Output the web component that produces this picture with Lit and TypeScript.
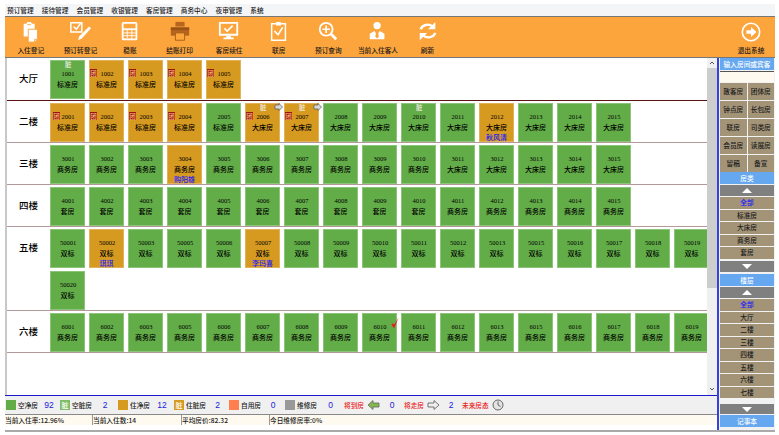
import { LitElement, html, css, svg, nothing } from 'lit';
import { customElement } from 'lit/decorators.js';

type Room = { no: string; type: string; busy?: boolean; team?: boolean; dirty?: boolean; out?: boolean; guest?: string; tick?: boolean; inset?: boolean };
type Floor = { name: string; rooms: Room[] };

const range = (from: number, to: number, type: string): Room[] => {
  const out: Room[] = [];
  for (let i = from; i <= to; i++) out.push({ no: String(i), type });
  return out;
};

const floors: Floor[] = [
  {
    name: '大厅',
    rooms: [
      { no: '1001', type: '标准房', dirty: true },
      { no: '1002', type: '标准房', busy: true, team: true },
      { no: '1003', type: '标准房', busy: true, team: true },
      { no: '1004', type: '标准房', busy: true, team: true },
      { no: '1005', type: '标准房', busy: true, team: true },
    ],
  },
  {
    name: '二楼',
    rooms: [
      { no: '2001', type: '标准房', busy: true, team: true, inset: true },
      { no: '2002', type: '标准房', busy: true, team: true },
      { no: '2003', type: '标准房', busy: true, team: true },
      { no: '2004', type: '标准房', busy: true, team: true },
      { no: '2005', type: '标准房' },
      { no: '2006', type: '大床房', busy: true, team: true, dirty: true, out: true },
      { no: '2007', type: '大床房', busy: true, team: true, dirty: true, out: true },
      { no: '2008', type: '大床房' },
      { no: '2009', type: '大床房' },
      { no: '2010', type: '大床房', dirty: true },
      { no: '2011', type: '大床房' },
      { no: '2012', type: '大床房', busy: true, guest: '秋风清' },
      ...range(2013, 2015, '大床房'),
    ],
  },
  {
    name: '三楼',
    rooms: [
      ...range(3001, 3003, '商务房'),
      { no: '3004', type: '商务房', busy: true, guest: '购阳雄' },
      ...range(3005, 3010, '商务房'),
      ...range(3011, 3015, '大床房'),
    ],
  },
  { name: '四楼', rooms: [...range(4001, 4010, '套房'), ...range(4011, 4015, '商务房')] },
  {
    name: '五楼',
    rooms: [
      { no: '50001', type: '双标' },
      { no: '50002', type: '双标', busy: true, guest: '琪琪' },
      { no: '50003', type: '双标' },
      { no: '50005', type: '双标' },
      { no: '50006', type: '双标' },
      { no: '50007', type: '双标', busy: true, guest: '李玛喜' },
      ...['50008', '50009', '50010', '50011', '50012', '50013', '50015', '50016', '50017', '50018', '50019', '50020'].map((no) => ({ no, type: '双标' })),
    ],
  },
  {
    name: '六楼',
    rooms: ['6001', '6002', '6003', '6005', '6006', '6007', '6008', '6009', '6010', '6011', '6012', '6013', '6015', '6016', '6017', '6018', '6019'].map((no) => ({
      no,
      type: '商务房',
      tick: no === '6010',
    })),
  },
];

const tools = [
  {
    label: '入住登记',
    icon: svg`<path d="M4 3h3l1-2h4l1 2h3v14H4z" fill="#fff"/><path d="M8 4h4" stroke="#fca53c"/><path d="M9 9h10v11l-3 3H9z" fill="#fff" stroke="#fca53c"/><path d="M19 20h-3v3" fill="none" stroke="#fca53c"/>`,
  },
  {
    label: '预订转登记',
    icon: svg`<path d="M2 2h12v10H2z" fill="none" stroke="#fff" stroke-width="1.6"/><path d="M5 6l3 3 5-7" fill="none" stroke="#fff" stroke-width="1.6"/><path d="M22 6l2 2-10 11-4 2 1-4z" fill="#fff"/>`,
  },
  {
    label: '稳账',
    icon: svg`<rect x="3" y="1" width="17" height="20" rx="2" fill="#fff"/><rect x="5" y="3" width="13" height="5" fill="#fca53c"/><path d="M5 10h13v9H5z" fill="#fca53c"/><path d="M5 13h13M5 16h13M9 10v9M14 10v9" stroke="#fff"/>`,
  },
  {
    label: '结账打印',
    icon: svg`<path d="M7 1h10v5H7z" fill="#b5651d"/><path d="M2 7h20v9H2z" fill="#b5651d" /><path d="M2 7h20v3H2z" fill="#9a5316"/><path d="M7 13h10v8H7z" fill="#fca53c" stroke="#a85c18"/>`,
  },
  {
    label: '客房续住',
    icon: svg`<path d="M2 2h19v13H2z" fill="#fca53c" stroke="#fff" stroke-width="2"/><path d="M7 8l3 3 6-6" fill="none" stroke="#fff" stroke-width="1.8"/><path d="M9 16h5v2h3v2H6v-2h3z" fill="#fff"/>`,
  },
  {
    label: '联房',
    icon: svg`<path d="M4 3h15v18H4z" fill="none" stroke="#fff" stroke-width="1.6"/><path d="M9 1h5v4H9z" fill="#fff"/><path d="M7 11l4 4 5-8" fill="none" stroke="#fff" stroke-width="1.8"/>`,
  },
  {
    label: '预订查询',
    icon: svg`<circle cx="10" cy="9" r="7" fill="none" stroke="#fff" stroke-width="2"/><path d="M6 9h8M10 5v8" stroke="#fff" stroke-width="1.8"/><path d="M15 14l6 6" stroke="#fff" stroke-width="3"/>`,
  },
  {
    label: '当前入住客人',
    icon: svg`<circle cx="11" cy="5" r="4" fill="#fff"/><path d="M3 20v-6l5-3 3 4 3-4 5 3v6z" fill="#fff"/><path d="M10 12h2l1 5-2 2-2-2z" fill="#fca53c"/>`,
  },
  {
    label: '刷新',
    icon: svg`<path d="M4 9a8 7 0 0 1 13-3" fill="none" stroke="#fff" stroke-width="2.6"/><path d="M20 1v8h-8z" fill="#fff"/><path d="M20 13a8 7 0 0 1-13 3" fill="none" stroke="#fff" stroke-width="2.6"/><path d="M3 21v-8h8z" fill="#fff"/>`,
  },
];

const groupBtns = ['散客房', '团体房', '钟点房', '长包房', '联房', '司类房', '会员房', '读展房', '留稿', '备宣'];
const typeItems = ['全部', '标准房', '大床房', '商务房', '套房'];
const floorItems = ['全部', '大厅', '二楼', '三楼', '四楼', '五楼', '六楼', '七楼'];
const stats = ['当前入住率:12.96%', '当前入住数:14', '平均房价:82.32', '今日维修房率:0%'];

@customElement('app-root')
export class AppRoot extends LitElement {
  static styles = css`
    :host {
      display: block;
      width: 779px;
      height: 435px;
      box-sizing: border-box;
      padding: 4px 4px 0 5px;
      background: #fff;
      font-family: 'Noto Sans CJK SC', 'Liberation Sans', sans-serif;
      font-size: 6.7px;
      font-weight: 500;
      color: #1a1a1a;
      overflow: hidden;
    }
    .menu {
      display: flex;
      height: 12px;
      line-height: 12px;
      padding-left: 2px;
      gap: 8px;
      background: #f4f5f7;
    }
    .toolbar {
      display: flex;
      height: 40px;
      padding-left: 1px;
      background: #fca53c;
      border-top: 1px solid #777;
      border-bottom: 1px solid #777;
    }
    .tool {
      width: 49.6px;
      flex: none;
      display: flex;
      flex-direction: column;
      align-items: center;
      padding-top: 4px;
      box-sizing: border-box;
      white-space: nowrap;
    }
    .tool svg {
      width: 22px;
      height: 22px;
      margin-bottom: 2px;
    }
    .tool span {
      line-height: 10px;
    }
    .tool.exit {
      margin-left: auto;
      width: 48px;
    }
    .body {
      display: flex;
      border-bottom: 2px solid #aaa;
      height: 372px;
    }
    .left {
      width: 712px;
      flex: none;
    }
    .work {
      display: flex;
      height: 337px;
      border-bottom: 1px solid #1a1acc;
    }
    .board {
      width: 700px;
      flex: none;
      border-left: 2px solid #c8c8c8;
      overflow: hidden;
    }
    .floor {
      display: flex;
      padding: 2px 0 0;
      border-bottom: 1px solid #b39a9a;
    }
    .floor.first {
      padding-bottom: 1px;
      border-bottom-color: #5a1414;
    }
    .fname {
      width: 43px;
      flex: none;
      text-align: center;
      font-size: 9.5px;
      line-height: 12px;
      padding-top: 12px;
      color: #000;
    }
    .rooms {
      flex: 0 0 663px;
      display: flex;
      flex-wrap: wrap;
      gap: 3px 4px;
    }
    .room {
      position: relative;
      width: 35px;
      height: 39px;
      box-sizing: border-box;
      border: 1px solid #8cc47a;
      background: #63ad49;
      text-align: center;
      padding-top: 8px;
      color: #000;
    }
    .room.busy {
      background: #d69a20;
      border-color: #e0b25a;
    }
    .no {
      font-family: 'Liberation Serif', serif;
      font-size: 6.5px;
      line-height: 9.5px;
      padding-left: 1px;
    }
    .type {
      font-size: 7px;
      line-height: 10px;
    }
    .guest {
      font-size: 7px;
      line-height: 10px;
      color: #1a1aff;
    }
    .team {
      position: absolute;
      left: 0;
      top: 8px;
      width: 7px;
      height: 8px;
      line-height: 8px;
      font-size: 6.5px;
      background: #a01414;
      color: #f3c27a;
    }
    .team.inset {
      left: 2px;
    }
    .dirty {
      position: absolute;
      left: 14px;
      top: -1px;
      font-size: 6.5px;
      line-height: 8px;
      color: #f1efe0;
    }
    .out {
      position: absolute;
      right: -4px;
      top: -1px;
      width: 9px;
      height: 8px;
    }
    .tick {
      position: absolute;
      right: -3px;
      top: 3px;
      width: 8px;
      height: 12px;
    }
    .scroll {
      width: 10px;
      flex: none;
      background: #f0f0f0;
      display: flex;
      flex-direction: column;
      align-items: stretch;
    }
    .scroll svg {
      width: 10px;
      height: 10px;
      flex: none;
    }
    .thumb {
      height: 220px;
      flex: none;
      background: #cdcdcd;
    }
    .scroll .down {
      margin-top: auto;
      margin-bottom: 1px;
    }
    .legend {
      display: grid;
      grid-template-columns: 54px 58px 56px 55px 56px 59px 60px 58px auto;
      height: 18px;
      align-items: center;
      padding-left: 1px;
      background: #f0f0f0;
    }
    .lg {
      display: flex;
      align-items: center;
      white-space: nowrap;
    }
    .sw {
      width: 10px;
      height: 10px;
      flex: none;
      margin-right: 2px;
      font-size: 7px;
      line-height: 10px;
      text-align: center;
      color: #fff;
    }
    .count {
      color: #1a1ad8;
      font-family: 'Liberation Sans', sans-serif;
      font-size: 8.5px;
      flex: 1;
      text-align: center;
    }
    .warn {
      color: #e82020;
    }
    .lg svg {
      flex: none;
      margin-left: 3px;
    }
    .status {
      display: grid;
      grid-template-columns: 87px 89px 88px 1fr;
      height: 11px;
      line-height: 10px;
      background: #fffaf0;
      border-top: 1px solid #888;
      box-sizing: border-box;
    }
    .status div + div {
      border-left: 1px solid #999;
    }
    .side {
      flex: 1;
      border-left: 2px solid #3344dd;
      padding: 0 1px 0 1px;
      background: #f2f2f2;
      display: flex;
      flex-direction: column;
      text-align: center;
    }
    .head {
      background: #66a8f0;
      color: #fff;
      height: 12px;
      line-height: 12px;
      flex: none;
      white-space: nowrap;
      overflow: hidden;
    }
    .search {
      height: 10px;
      margin: 1px 0 1px;
      flex: none;
      background: #fffaf0;
      border-top: 1px solid #555;
    }
    .btns {
      display: grid;
      grid-template-columns: 1fr 1fr;
      grid-auto-rows: 17px;
      gap: 1px;
      flex: none;
    }
    .btns div,
    .item {
      background: #a39478;
      color: #1a1a1a;
    }
    .btns div {
      line-height: 17px;
    }
    .item {
      height: 11.5px;
      line-height: 11.5px;
      margin-bottom: 1px;
      flex: none;
    }
    .item.on {
      color: #1a1aff;
    }
    .arrow {
      height: 11px;
      flex: none;
      margin: 1px 0;
      background: #808080;
      display: flex;
      align-items: center;
      justify-content: center;
    }
    .arrow i {
      display: block;
      border-left: 5px solid transparent;
      border-right: 5px solid transparent;
      border-bottom: 5px solid #fff;
    }
    .arrow.dn {
      margin-bottom: 2.5px;
    }
    .arrow.dn i {
      border-bottom: 0;
      border-top: 5px solid #fff;
    }
    .arrow.late {
      margin-top: 5px;
      height: 10px;
      margin-bottom: 1px;
    }
  `;

  private renderRoom(r: Room) {
    return html`<div class="room ${r.busy ? 'busy' : ''}">
      ${r.team ? html`<span class="team ${r.inset ? 'inset' : ''}">团</span>` : nothing}
      ${r.dirty ? html`<span class="dirty">脏</span>` : nothing}
      ${r.out
        ? html`<svg class="out" viewBox="0 0 9 8"><path d="M1 2h4V0.5L8.5 4 5 7.5V6H1z" fill="#d8d8d8" stroke="#555" stroke-width=".7"/></svg>`
        : nothing}
      ${r.tick
        ? html`<svg class="tick" viewBox="0 0 8 12"><path d="M0.5 7.5l2.5 4L7.8 0.3 3.4 7.6 1.4 6.4z" fill="#f0142a"/></svg>`
        : nothing}
      <div class="no">${r.no}</div>
      <div class="type">${r.type}</div>
      ${r.guest ? html`<div class="guest">${r.guest}</div>` : nothing}
    </div>`;
  }

  private legendItem(color: string, label: string, count: string, mark = '') {
    return html`<div class="lg">
      <span class="sw" style="background:${color}">${mark}</span>${label}<span class="count">${count}</span>
    </div>`;
  }

  render() {
    return html`
      <div class="menu">
        ${['预订管理', '接待管理', '会员管理', '收银管理', '客房管理', '商务中心', '夜审管理', '系统'].map((m) => html`<span>${m}</span>`)}
      </div>
      <div class="toolbar">
        ${tools.map((t) => html`<div class="tool"><svg viewBox="0 0 24 24">${t.icon}</svg><span>${t.label}</span></div>`)}
        <div class="tool exit">
          <svg viewBox="0 0 24 24">
            <circle cx="12" cy="12" r="9.5" fill="none" stroke="#fff" stroke-width="1.8" />
            <path d="M7 10h5V6.5l6 5.5-6 5.5V14H7z" fill="#fff" />
          </svg>
          <span>退出系统</span>
        </div>
      </div>
      <div class="body">
        <div class="left">
          <div class="work">
            <div class="board">
              ${floors.map(
                (f, i) => html`<div class="floor ${i === 0 ? 'first' : ''}">
                  <div class="fname">${f.name}</div>
                  <div class="rooms">${f.rooms.map((r) => this.renderRoom(r))}</div>
                </div>`,
              )}
            </div>
            <div class="scroll">
              <svg viewBox="0 0 10 10"><path d="M3 6l2-2 2 2" fill="none" stroke="#555" /></svg>
              <div class="thumb"></div>
              <svg class="down" viewBox="0 0 10 10"><path d="M3 4l2 2 2-2" fill="none" stroke="#555" /></svg>
            </div>
          </div>
          <div class="legend">
            ${this.legendItem('#63ad49', '空净房', '92')}
            ${this.legendItem('#7fbd69', '空脏房', '2', '脏')}
            ${this.legendItem('#d69a20', '住净房', '12')}
            ${this.legendItem('#d69a20', '住脏房', '2', '脏')}
            ${this.legendItem('#ff7f50', '自用房', '0')}
            ${this.legendItem('#999', '维修房', '0')}
            <div class="lg">
              <span class="warn">将到房</span>
              <svg width="13" height="10" viewBox="0 0 13 10"><path d="M12 3H6V0.5L1 5l5 4.5V7h6z" fill="#86b84e" stroke="#666" stroke-width=".8" /></svg>
              <span class="count">0</span>
            </div>
            <div class="lg">
              <span class="warn">将走房</span>
              <svg width="13" height="10" viewBox="0 0 13 10"><path d="M1 3h6V0.5L12 5 7 9.5V7H1z" fill="#eee" stroke="#555" stroke-width=".8" /></svg>
              <span class="count">2</span>
            </div>
            <div class="lg">
              <span class="warn">未来房态</span>
              <svg width="12" height="12" viewBox="0 0 12 12"><circle cx="6" cy="6" r="5" fill="#e4e4e4" stroke="#666" /><path d="M6 2.5V6l2.5 1.5" fill="none" stroke="#444" stroke-width=".8" /></svg>
            </div>
          </div>
          <div class="status">${stats.map((s) => html`<div>${s}</div>`)}</div>
        </div>
        <div class="side">
          <div class="head">输入房间或宾客</div>
          <div class="search"></div>
          <div class="btns">${groupBtns.map((b) => html`<div>${b}</div>`)}</div>
          <div class="head">房类</div>
          <div class="arrow"><i></i></div>
          ${typeItems.map((t, i) => html`<div class="item ${i === 0 ? 'on' : ''}">${t}</div>`)}
          <div class="arrow dn"><i></i></div>
          <div class="head">楼层</div>
          <div class="arrow"><i></i></div>
          ${floorItems.map((t, i) => html`<div class="item ${i === 0 ? 'on' : ''}">${t}</div>`)}
          <div class="arrow dn late"><i></i></div>
          <div class="head">记事本</div>
        </div>
      </div>
    `;
  }
}

declare global {
  interface HTMLElementTagNameMap {
    'app-root': AppRoot;
  }
}
